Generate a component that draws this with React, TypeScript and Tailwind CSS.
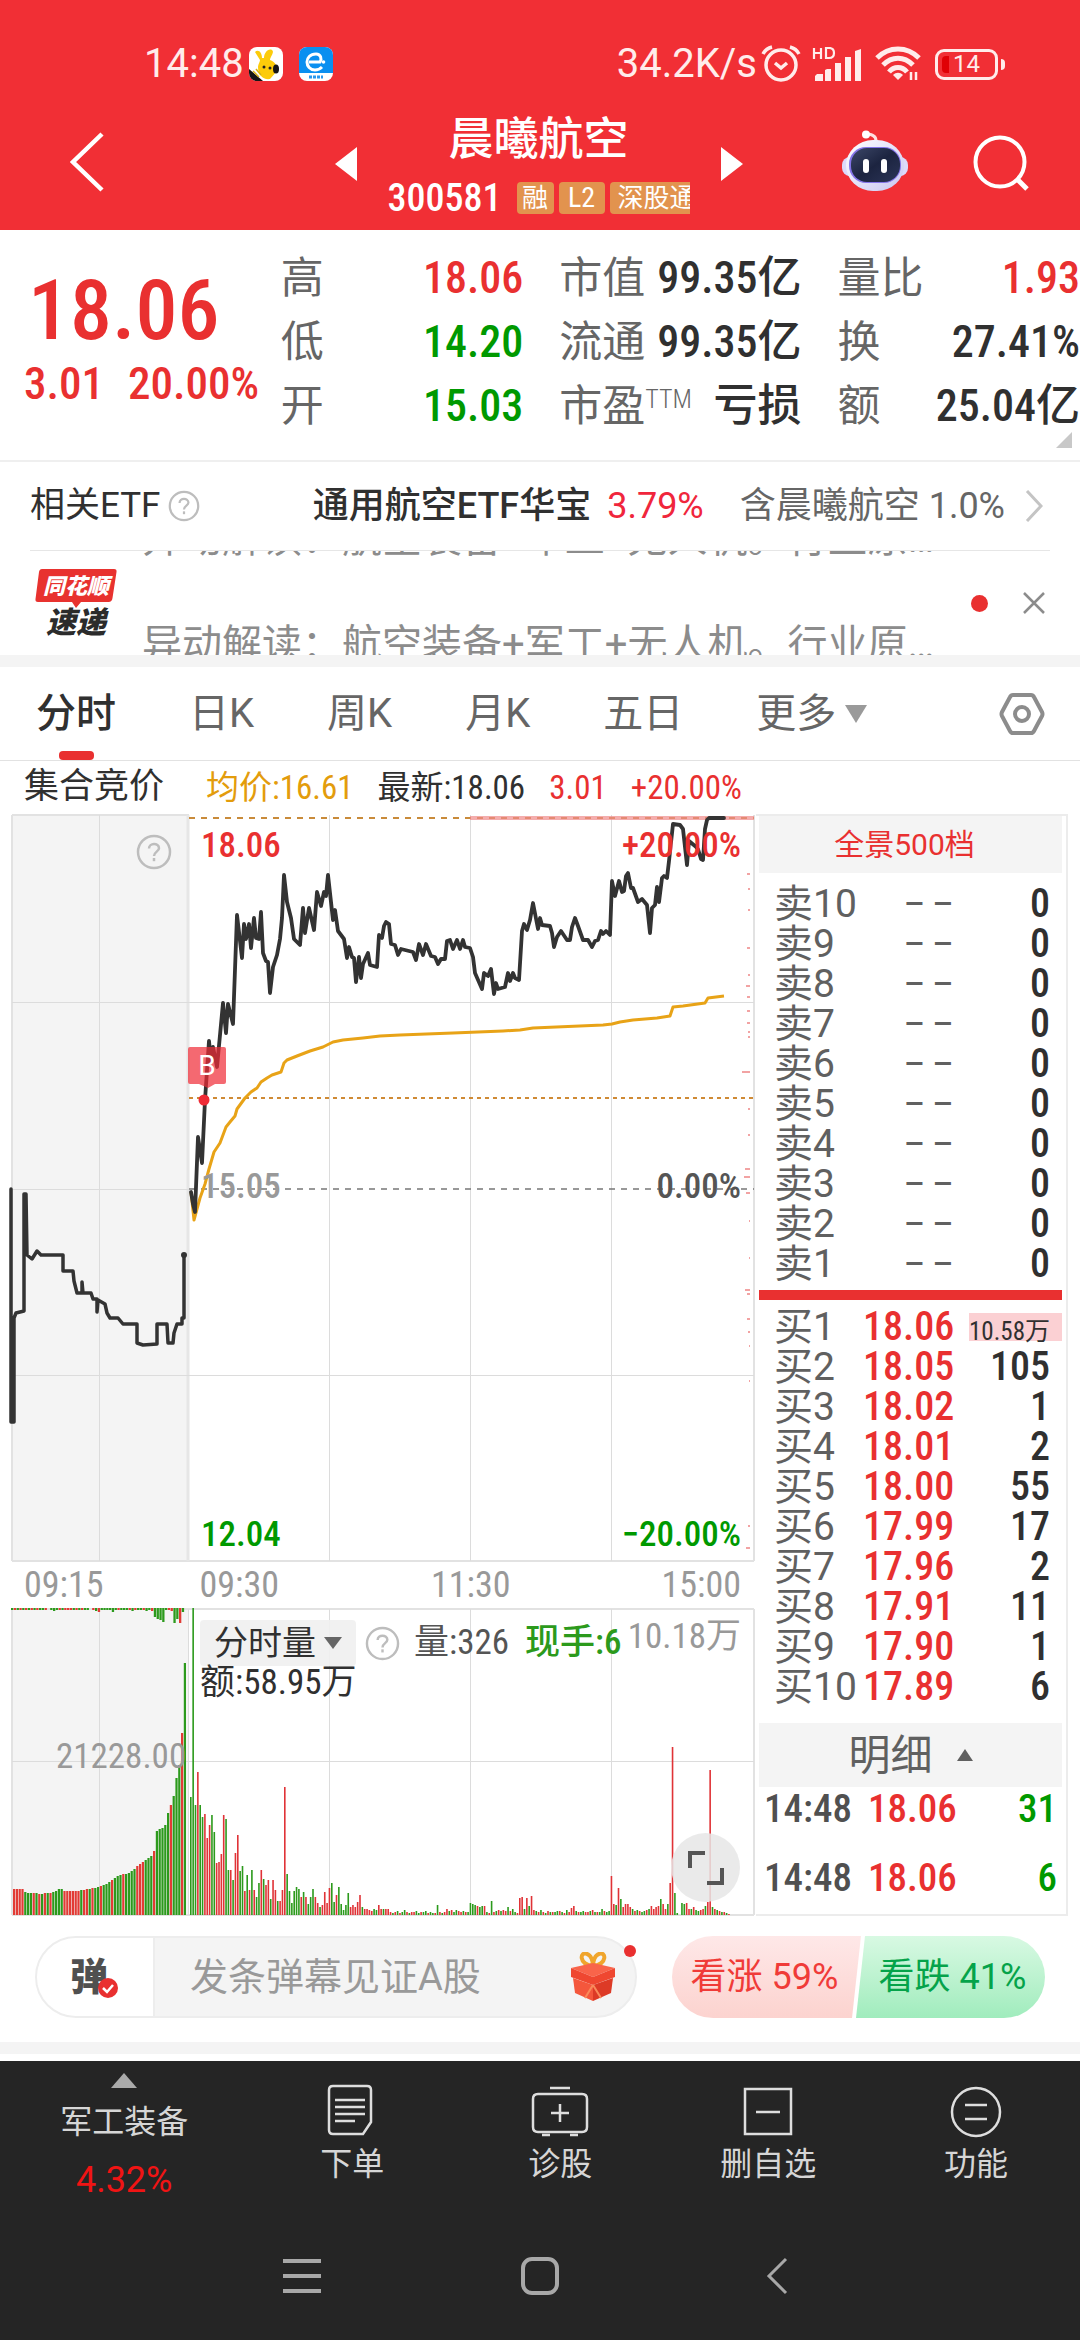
import { useState } from 'react';
import { clsx } from 'clsx';

const condensed = "font-[family-name:'Roboto_Condensed','Noto_Sans_CJK_SC',sans-serif]";

type Point = [number, number];

const auctionLine: Point[] = [
  [11, 375], [11, 608], [14, 608], [14, 504], [16, 499], [24, 497], [24, 380], [26, 380], [27, 441], [32, 445],
  [37, 437], [41, 441], [63, 441], [63, 457], [73, 457], [74, 467], [77, 479], [82, 479], [82, 468], [83, 479],
  [91, 479], [93, 485], [97, 485], [97, 498], [98, 486], [105, 490], [107, 499], [110, 504], [118, 504], [123, 510],
  [137, 510], [137, 529], [143, 531], [157, 530], [157, 510], [167, 510], [168, 529], [173, 529], [174, 519],
  [177, 510], [182, 510], [182, 504], [184, 504], [184, 441],
];

const priceLine: Point[] = [
  [191, 378], [193, 390], [195, 398], [198, 323], [202, 349], [205, 286], [209, 227], [211, 247], [213, 233],
  [217, 253], [223, 189], [226, 219], [228, 190], [233, 210], [237, 101], [242, 144], [244, 110], [246, 125],
  [249, 110], [251, 134], [254, 104], [256, 124], [259, 125], [261, 98], [263, 139], [266, 147], [268, 148],
  [270, 179], [273, 153], [277, 141], [280, 125], [282, 104], [284, 61], [287, 88], [291, 104], [294, 125],
  [300, 131], [303, 94], [305, 119], [309, 94], [314, 116], [317, 78], [321, 92], [324, 78], [326, 82], [328, 61],
  [333, 106], [335, 96], [338, 117], [344, 125], [347, 144], [349, 133], [352, 143], [354, 144], [356, 168],
  [359, 143], [361, 164], [363, 150], [368, 139], [370, 151], [377, 153], [379, 121], [382, 124], [384, 112],
  [386, 108], [389, 110], [391, 130], [395, 131], [398, 141], [401, 135], [413, 138], [416, 146], [419, 130],
  [423, 141], [426, 130], [431, 142], [435, 143], [438, 150], [441, 145], [445, 145], [447, 127], [450, 126],
  [453, 135], [457, 126], [460, 135], [463, 126], [465, 133], [470, 134], [473, 143], [475, 159], [482, 175],
  [484, 159], [488, 162], [491, 155], [494, 180], [496, 169], [498, 175], [505, 173], [508, 159], [510, 167],
  [513, 159], [515, 164], [519, 166], [522, 117], [524, 110], [527, 116], [530, 106], [533, 89], [538, 115],
  [540, 104], [542, 111], [550, 112], [552, 119], [554, 133], [557, 123], [561, 117], [567, 126], [570, 126],
  [572, 113], [575, 104], [578, 112], [583, 126], [588, 126], [592, 133], [595, 127], [598, 126], [601, 117],
  [603, 120], [606, 117], [610, 121], [612, 67], [615, 82], [619, 67], [622, 78], [624, 77], [626, 62], [628, 59],
  [631, 74], [633, 74], [638, 88], [642, 85], [647, 91], [650, 119], [652, 94], [655, 91], [657, 73], [659, 88],
  [662, 64], [664, 62], [667, 64], [669, 47], [673, 10], [680, 11], [683, 15], [687, 51], [689, 27], [695, 32],
  [698, 35], [701, 45], [703, 46], [705, 15], [707, 6], [709, 4], [724, 4],
];

const averageLine: Point[] = [
  [191, 378], [194, 406], [200, 384], [205, 370], [209, 355], [214, 338], [220, 329], [226, 313], [230, 308],
  [235, 302], [237, 295], [245, 284], [251, 278], [257, 274], [261, 268], [267, 264], [272, 261], [281, 258],
  [284, 249], [287, 246], [297, 242], [310, 237], [323, 233], [333, 228], [343, 226], [363, 224], [380, 222],
  [400, 221], [453, 219], [503, 217], [520, 216], [533, 214], [603, 211], [612, 210], [620, 208], [633, 206],
  [657, 204], [670, 202], [673, 193], [683, 192], [705, 189], [708, 184], [724, 182],
];

// y, width
const priceProfile: Point[] = [
  [59, 3], [74, 2], [95, 2], [133, 3], [160, 2], [171, 4], [182, 3], [196, 3], [208, 3], [217, 2], [222, 2],
  [257, 8], [294, 2], [320, 2], [354, 5], [362, 6], [378, 4], [406, 1], [443, 1], [475, 5], [479, 3], [504, 3],
  [517, 2], [531, 1], [566, 1], [711, 2], [733, 4],
];

// positive = up, negative = down
const auctionVolume = [
  26, 26, 26, 26, -23, -22, -22, 22, -22, 21, -21, 22, -22, 22, -23, -24, -26, -26, 24, 24, 24, 24, 24, 24, -25,
  25, 26, -26, 27, -27, -28, 29, -30, -31, -33, 35, -37, -39, -40, 41, -41, -42, -44, -46, 49, 51, 53, -55, -57,
  -59, 64, -84, -86, -87, -90, -102, 110, -119, -137, -150, 182, -252,
];

const auctionUnmatched = [
  -2, 2, -2, 2, -2, 2, -2, 2, -2, 2, -2, -2, 2, 0, -2, -3, -2, 2, -2, 2, 2, 2, -2, 2, -2, 2, -2, -2, 0, 2, -3, 4, -2,
  -2, -2, -2, -4, -2, 2, -2, -2, -2, 2, -3, 2, -2, -2, 2, -3, -2, 3, -9, -11, -12, -14, -2, 2, 3, -15, -11, 15, -4,
];

const minuteVolume = [
  -118, -307, -110, 143, -110, -98, 101, 77, 90, -100, -83, 52, 53, 61, 100, -96, -45, 45, -35, 62, 80, -44, -49, 24,
  -40, 25, -45, 25, -18, -32, 45, -36, 30, 35, -16, 35, 25, -14, 14, 25, 128, -41, -24, -12, -24, -28, -26, 18, -23,
  18, -11, -18, -26, 18, 12, -8, 10, 23, 12, 27, -32, -13, 20, -28, -11, -5, -10, -22, 8, 10, 8, 13, 20, -8, 6, 6, 5,
  4, -6, -5, 10, 6, -6, 6, 6, 3, -2, 3, -4, 2, -3, -5, 3, -2, 3, 3, -4, -2, 3, -3, -4, 2, -3, -2, 2, -10, 3, -2, 3, 6,
  -4, 5, -3, -5, 4, 3, -4, 3, -3, -12, -11, -10, 9, -8, -9, 9, -3, 2, -14, 3, -4, 5, -4, 5, 4, -8, 4, -6, -3, 2, 17,
  18, -6, 17, -9, 19, 5, -4, 3, -5, 3, -2, 4, -3, 3, -3, -4, 4, -3, 2, -5, 3, 7, 9, -4, 3, -3, -4, 3, 3, -4, 5, -3, 3,
  -3, -6, 4, -3, -4, 39, 11, -10, 27, -16, 8, 11, 11, 8, -6, 4, -5, 4, -3, -4, 5, -6, 9, 6, 8, 9, -16, 11, 6, -11, 32,
  168, -22, -2, 0, -12, -11, 12, 6, -6, 8, -5, -4, 5, 6, -9, 13, 145, -8, 6, -5, 4, -3, 3, -2, 1,
];

const sellOrders = ['卖10', '卖9', '卖8', '卖7', '卖6', '卖5', '卖4', '卖3', '卖2', '卖1'];

const buyOrders = [
  { level: '买1', price: '18.06', amount: '10.58万', highlight: true },
  { level: '买2', price: '18.05', amount: '105' },
  { level: '买3', price: '18.02', amount: '1' },
  { level: '买4', price: '18.01', amount: '2' },
  { level: '买5', price: '18.00', amount: '55' },
  { level: '买6', price: '17.99', amount: '17' },
  { level: '买7', price: '17.96', amount: '2' },
  { level: '买8', price: '17.91', amount: '11' },
  { level: '买9', price: '17.90', amount: '1' },
  { level: '买10', price: '17.89', amount: '6' },
];

const trades = [
  { time: '14:48', price: '18.06', amount: '31' },
  { time: '14:48', price: '18.06', amount: '6' },
];

const toPoints = (points: Point[]) => points.map((p) => p.join(',')).join(' ');

const HelpIcon = ({ className }: { className?: string }) => (
  <svg viewBox="0 0 36 36" className={className} fill="none" stroke="#bdbdbd" strokeWidth="2.5">
    <circle cx="18" cy="18" r="16" />
    <path d="M13 14.5c0-6 10-6 10-.3 0 3.4-5 3.6-5 7.8" />
    <path d="M18 24v3.2" />
  </svg>
);

const StatusBar = () => (
  <div className="flex h-[128px] items-center justify-between pl-[144px] pr-[75px] text-[40px] leading-[48px] text-[#ffeceb]">
    <div className="flex items-center">
      <span className="w-[105px]">14:48</span>
      <svg viewBox="0 0 34 34" className="h-[34px] w-[34px]">
        <rect width="34" height="34" rx="8" fill="#fff" />
        <path d="M0 22 14 34H8a8 8 0 0 1-8-8z" fill="#151515" />
        <path d="M9 20c0-3 2-5 2-7L6 5c3-3 7 0 7 6h2c0-5 4-10 8-8 3 2-2 7-2 10 5 2 8 6 7 11l-7 8c-7 1-12-4-12-12z" fill="#fccb0a" />
        <circle cx="15" cy="20" r="1.5" fill="#222" />
        <circle cx="21" cy="21" r="1.5" fill="#222" />
        <ellipse cx="27" cy="22" rx="3" ry="4.5" fill="#151515" />
        <path d="m4 24 6 6M7 22l5 6" stroke="#d7b316" strokeWidth="1.5" />
      </svg>
      <svg viewBox="0 0 34 34" className="ml-4 h-[34px] w-[34px]">
        <rect width="34" height="34" rx="8" fill="#fff" />
        <path d="M0 26V8a8 8 0 0 1 8-8h18a8 8 0 0 1 8 8v18z" fill="#0a8ff0" />
        <path d="M10 15h11c2-3 1-8-4-8-6 0-9 4-9 8s3 8 8 8c3 0 5-1 7-3" fill="none" stroke="#fff" strokeWidth="3" />
        <circle cx="24.5" cy="15" r="1.8" fill="#fff" />
        <path d="M10 30h14" stroke="#2a98ee" strokeWidth="3" strokeDasharray="3 1" />
      </svg>
    </div>
    <div className="flex items-center">
      <span>34.2K/s</span>
      <svg viewBox="0 0 40 38" className="ml-1 h-[38px] w-[40px]" fill="none" stroke="#ffeceb" strokeWidth="3.5">
        <circle cx="20" cy="20" r="15" />
        <path d="m14 18 6 5 6-5M2 9c2-4 5-6 9-7M38 9c-2-4-5-6-9-7" />
      </svg>
      <svg viewBox="0 0 50 34" className="ml-[11px] h-[34px] w-[50px]">
        <path d="M3 34v-5l2-2h6v7zM13 34V23l2-1h4v12zM23 34V16h6v18zM33 34V10h6v24zM43 34V4l6-2v32z" fill="#ffeceb" />
        <path d="M2 1v11M9 1v11M2 6h7M14 2v9h3q5 0 5-5t-5-5h-3z" fill="none" stroke="#ffeceb" strokeWidth="2.2" />
      </svg>
      <svg viewBox="0 0 46 36" className="ml-[13px] h-[36px] w-[46px]" fill="none" stroke="#ffeceb" strokeWidth="5">
        <path d="M2 12c12-12 30-12 42 0M8 19c9-9 21-9 30 0M14 26c5-6 13-6 18 0" />
        <path d="M18 29c3-3 7-3 10 0l-5 5z" fill="#ffeceb" stroke="none" />
        <path d="M36 26v8M41 26v8" strokeWidth="2.5" />
      </svg>
      <span className="relative ml-[14px] flex h-[31px] w-[63px] items-center justify-center rounded-[9px] border-3 border-[#ffeceb] text-[24px]">
        <span className="absolute bottom-1 left-1 top-1 w-[7px] rounded-l bg-[#e00005]" />
        14
      </span>
      <span className="ml-[3px] h-[11px] w-[4px] rounded-r bg-[#ffeceb]" />
    </div>
  </div>
);

const StockHeader = () => (
  <header className="flex h-[102px] justify-between pl-[70px] pr-[50px] text-white">
    <button aria-label="返回" className="h-[68px] w-[36px]">
      <svg viewBox="0 0 36 60" className="h-[60px] w-[36px]" fill="none" stroke="#fff" strokeWidth="4.5">
        <path d="M32 2 3 30l29 28" />
      </svg>
    </button>
    <div className="ml-[130px] flex">
      <button aria-label="上一只" className="mt-[18px] h-[36px] w-[24px]">
        <svg viewBox="0 0 24 36" className="h-[36px] w-[24px]"><path d="M23 1v34L1 18z" fill="#fff" /></svg>
      </button>
      <div className="-mt-[16px] w-[362px] overflow-hidden px-[30px]">
        <h1 className="text-center text-[45px] font-medium leading-[56px]">晨曦航空</h1>
        <div className={clsx('mt-3 flex h-[36px] items-center gap-[5px] overflow-hidden', condensed)}>
          <span className="mr-[10px] text-[38px] font-medium leading-[36px]">300581</span>
          <span className="w-[37px] shrink-0 rounded-sm bg-[#e2934e] text-center text-[26px] leading-[32px]">融</span>
          <span className="w-[46px] shrink-0 rounded-sm bg-[#e2934e] text-center text-[28px] leading-[32px]">L2</span>
          <span className="shrink-0 whitespace-nowrap rounded-sm bg-[#e2934e] pl-2 text-[26px] leading-[32px]">深股通</span>
        </div>
      </div>
      <button aria-label="下一只" className="mt-[18px] h-[36px] w-[24px]">
        <svg viewBox="0 0 24 36" className="h-[36px] w-[24px]"><path d="M1 1v34l22-17z" fill="#fff" /></svg>
      </button>
    </div>
    <div className="flex gap-[64px]">
      <button aria-label="智能助手" className="h-[66px] w-[68px]">
        <svg viewBox="0 0 66 62" className="h-[62px] w-[68px]">
          <defs>
            <linearGradient id="head" x1="0" y1="0" x2="1" y2="1">
              <stop offset="0" stopColor="#fff" />
              <stop offset="1" stopColor="#c9c6f2" />
            </linearGradient>
            <linearGradient id="face" x1="0" y1="0" x2="1" y2="1">
              <stop offset="0" stopColor="#3c4768" />
              <stop offset="0.5" stopColor="#1c2440" />
              <stop offset="1" stopColor="#2b3457" />
            </linearGradient>
          </defs>
          <path d="M24 4c6 0 10 2 10 7" fill="none" stroke="#ffdfe0" strokeWidth="3" />
          <circle cx="24" cy="4.5" r="4" fill="#fff" />
          <rect x="0" y="27" width="66" height="19" rx="8" fill="#dcd9fb" />
          <rect x="4" y="10" width="58" height="51" rx="27" fill="url(#head)" />
          <rect x="7" y="17" width="52" height="36" rx="17" fill="#8474e8" />
          <rect x="9" y="18" width="49" height="34" rx="16" fill="url(#face)" />
          <rect x="21" y="29" width="6" height="14" rx="3" fill="#fff" />
          <rect x="39" y="29" width="6" height="14" rx="3" fill="#fff" />
        </svg>
      </button>
      <button aria-label="搜索" className="h-[66px] w-[57px]">
        <svg viewBox="0 0 57 56" className="mt-1 h-[56px] w-[57px]" fill="none" stroke="#fff" strokeWidth="4">
          <circle cx="27" cy="27" r="24.5" />
          <path d="m44 44 10 10" strokeWidth="5" />
        </svg>
      </button>
    </div>
  </header>
);

const QuoteCell = ({ label, value, tone = 'text-[#303030]', sup }: { label: string; value: string; tone?: string; sup?: string }) => (
  <div className="flex h-[64px] items-center justify-between whitespace-nowrap">
    <span className="flex text-[43px] text-[#666]">
      {label}
      {sup && <span className={clsx('text-[26px] font-light leading-[50px]', condensed)}>{sup}</span>}
    </span>
    <span className={clsx('text-[44px] font-medium', condensed, tone)}>{value}</span>
  </div>
);

const QuotePanel = () => (
  <section className="relative flex h-[232px] border-b-2 border-[#efefef] pt-[16px]">
    <div className={clsx('w-[26%] whitespace-nowrap pl-6 text-[#e93030]', condensed)}>
      <div className="mt-3 pl-1 text-[84px] font-medium leading-[106px]">18.06</div>
      <div className="flex gap-6 text-[45px] font-medium leading-[40px]">
        <span>3.01</span>
        <span>20.00%</span>
      </div>
    </div>
    <div className="grid flex-1 grid-cols-3 content-start gap-x-9 leading-[64px]">
      <QuoteCell label="高" value="18.06" tone="text-[#e93030]" />
      <QuoteCell label="市值" value="99.35亿" />
      <QuoteCell label="量比" value="1.93" tone="text-[#e93030]" />
      <QuoteCell label="低" value="14.20" tone="text-[#009900]" />
      <QuoteCell label="流通" value="99.35亿" />
      <QuoteCell label="换" value="27.41%" />
      <QuoteCell label="开" value="15.03" tone="text-[#009900]" />
      <QuoteCell label="市盈" sup="TTM" value="亏损" />
      <QuoteCell label="额" value="25.04亿" />
    </div>
    <svg viewBox="0 0 16 16" className="absolute bottom-[12px] right-2 h-4 w-4"><path d="M16 0v16H0z" fill="#c8c8c8" /></svg>
  </section>
);

const EtfRow = () => (
  <section className="mx-[30px] flex h-[89px] items-center border-b border-[#e6e6e6] pr-[7px] text-[36px] text-[#303030]">
    <span className="text-[35px]">相关ETF</span>
    <HelpIcon className="ml-2 h-8 w-8" />
    <a href="#etf" className="ml-auto flex items-center whitespace-nowrap">
      <span className="font-medium">通用航空ETF华宝</span>
      <span className="ml-4 text-[#f0263c]">3.79%</span>
      <span className="ml-9 text-[#666]">含晨曦航空 1.0%</span>
      <svg viewBox="0 0 18 32" className="ml-5 h-8 w-[18px]" fill="none" stroke="#c4c4c4" strokeWidth="3"><path d="m2 1 14 15L2 31" /></svg>
    </a>
  </section>
);

const NewsTicker = ({ onClose }: { onClose: () => void }) => (
  <section className="flex h-[104px] items-start overflow-hidden pl-[34px] pr-[34px]">
    <svg viewBox="0 0 84 72" className="mt-4 h-[72px] w-[84px] shrink-0">
      <path d="M8 2h72q3 0 2.5 3l-4 26q-.5 4-4 4H47l-5 6-4-6H4q-3 0-2.5-3L5 5q.5-3 3-3z" fill="#e8322f" />
      <text x="42" y="27" textAnchor="middle" fontSize="22" fontWeight="900" fontStyle="italic" fill="#fff" fontFamily="'Noto Sans CJK SC', sans-serif">同花顺</text>
      <text x="42" y="66" textAnchor="middle" fontSize="30" fontWeight="900" fontStyle="italic" fill="#2b2b2b" fontFamily="'Noto Sans CJK SC', sans-serif">速递</text>
    </svg>
    <div className="-mt-[65px] ml-[24px] w-[815px] text-[40px] leading-[106px] text-[#8c8c8c]">
      <p className="truncate">异动解读：航空装备+军工+无人机。行业原因：军工</p>
      <p className="truncate">异动解读：航空装备+军工+无人机。行业原因：军工</p>
    </div>
    <span className="ml-auto mt-11 h-[17px] w-[17px] rounded-full bg-[#e93030]" />
    <button aria-label="关闭" onClick={onClose} className="ml-[34px] mt-10 h-6 w-6">
      <svg viewBox="0 0 24 24" className="h-6 w-6" stroke="#8c8c8c" strokeWidth="2.5"><path d="m2 2 20 20M22 2 2 22" /></svg>
    </button>
  </section>
);

const tabs = ['分时', '日K', '周K', '月K', '五日'];

const PeriodTabs = () => {
  const [active, setActive] = useState('分时');

  return (
    <nav className="flex h-[94px] items-stretch gap-[73px] border-b border-[#e2e2e2] pl-[36px] pr-[35px] text-[40px] text-[#666]">
      {tabs.map((tab) => (
        <button
          key={tab}
          onClick={() => setActive(tab)}
          className={clsx('relative whitespace-nowrap', active === tab && 'font-medium text-[#303030]')}
        >
          {tab}
          {active === tab && <span className="absolute bottom-0 left-1/2 -ml-[17px] h-[9px] w-[35px] rounded bg-[#e93030]" />}
        </button>
      ))}
      <button className="flex items-center gap-[9px] whitespace-nowrap">
        更多
        <svg viewBox="0 0 22 18" className="h-[18px] w-[22px]"><path d="M0 0h22L11 18z" fill="#9a9a9a" /></svg>
      </button>
      <button aria-label="设置" className="ml-auto">
        <svg viewBox="0 0 46 44" className="h-[44px] w-[46px]" fill="none" stroke="#8c8c8c" strokeWidth="4">
          <path d="M14 3h18q2 0 3 2l8 15q1 2 0 4l-8 15q-1 2-3 2H14q-2 0-3-2L3 24q-1-2 0-4l8-15q1-2 3-2z" />
          <circle cx="23" cy="22" r="7" />
        </svg>
      </button>
    </nav>
  );
};

const PriceChart = () => (
  <div className={clsx('relative h-[748px] text-[35px] font-medium leading-[34px]', condensed)}>
    <svg viewBox="0 0 756 748" preserveAspectRatio="none" className="h-full w-full" fill="none">
      <rect x="12" y="1" width="177" height="746" fill="#f4f4f4" />
      <path d="M12 1V747M754 1V747M12 747H754M12 1H189" stroke="#e2e2e2" strokeWidth="2" />
      <path d="M188 1V747" stroke="#e6e6e6" strokeWidth="3" />
      <path d="M99.5 1V747M329.5 1V747M470.5 1V747M611.5 1V747M12 188.5H754M12 375.5H189M12 561.5H754" stroke="#dcdcdc" />
      <path d="M189 4H754" stroke="#c98b3a" strokeWidth="2" strokeDasharray="6 6" />
      <path d="M470 4H754" stroke="#f08a8a" strokeOpacity="0.7" strokeWidth="4" />
      <path d="M189 284H754" stroke="#cf8a35" strokeWidth="2" strokeDasharray="4 4" />
      <path d="M189 375H754" stroke="#777" strokeWidth="1.5" strokeDasharray="6 6" />
      {priceProfile.map(([y, w]) => (
        <rect key={y} x={750 - w} y={y} width={w} height="2" fill="#f2a3a3" />
      ))}
      <polyline points={toPoints(averageLine)} stroke="#e8a317" strokeWidth="3" strokeLinejoin="round" />
      <polyline points={toPoints(auctionLine)} stroke="#333" strokeWidth="3.5" strokeLinejoin="round" strokeLinecap="round" />
      <polyline points={toPoints(priceLine)} stroke="#333" strokeWidth="3.8" strokeLinejoin="round" strokeLinecap="round" />
      <circle cx="184" cy="441" r="3" fill="#333" />
      <circle cx="204" cy="286" r="5.5" fill="#ef2a35" />
      <path d="M190 233h34q2 0 2 2v33q0 2-2 2h-9l-7 4-9-4h-9q-2 0-2-2v-33q0-2 2-2z" fill="#ef2a35" fillOpacity="0.7" />
    </svg>
    <span className="absolute left-[188px] top-[236px] w-[38px] text-center font-[family-name:Roboto,sans-serif] text-[28px] font-normal leading-[32px] text-white">B</span>
    <HelpIcon className="absolute left-[136px] top-[20px] h-[36px] w-[36px]" />
    <span className="absolute left-[201px] top-[15px] text-[#e93030]">18.06</span>
    <span className="absolute right-[15px] top-[15px] text-[#e93030]">+20.00%</span>
    <span className="absolute left-[201px] top-[356px] text-[#999]">15.05</span>
    <span className="absolute right-[15px] top-[356px] text-[#555]">0.00%</span>
    <span className="absolute bottom-[10px] left-[201px] text-[#009900]">12.04</span>
    <span className="absolute bottom-[10px] right-[15px] text-[#009900]">−20.00%</span>
  </div>
);

const VolumeChart = () => (
  <div className={clsx('relative h-[308px] text-[35px] leading-[36px]', condensed)}>
    <svg viewBox="0 0 756 308" preserveAspectRatio="none" className="h-full w-full" fill="none">
      <rect x="12" y="1" width="177" height="306" fill="#f4f4f4" />
      <path d="M12 1V307M754 1V307M12 307H754M12 1H754" stroke="#e2e2e2" strokeWidth="2" />
      <path d="M99.5 1V307M188.5 1V307M329.5 1V307M470.5 1V307M611.5 1V307M12 153.5H754" stroke="#dcdcdc" />
      {auctionVolume.map((v, i) => (
        <rect key={i} x={13 + i * 2.8} y={307 - Math.abs(v)} width="2.2" height={Math.abs(v)} fill={v > 0 ? '#e23b35' : '#2c9a1c'} />
      ))}
      {auctionUnmatched.map((v, i) => (
        <rect key={i} x={11 + i * 2.8} y="0" width="2.3" height={Math.abs(v)} fill={v > 0 ? '#e23b35' : '#2c9a1c'} />
      ))}
      {minuteVolume.map((v, i) => (
        <rect key={i} x={190 + i * 2.35} y={307 - Math.abs(v)} width="1.6" height={Math.abs(v)} fill={v > 0 ? '#e03337' : '#2c9a1c'} />
      ))}
    </svg>
    <div className="absolute left-[200px] right-[15px] top-[12px] flex items-center whitespace-nowrap">
      <button className="flex h-[46px] w-[156px] items-center gap-2 rounded bg-[#efefef]/90 pl-[14px] text-[34px] text-[#303030]">
        分时量
        <svg viewBox="0 0 18 12" className="h-[12px] w-[18px]"><path d="M0 0h18L9 12z" fill="#666" /></svg>
      </button>
      <HelpIcon className="ml-[9px] h-[35px] w-[35px]" />
      <span className="ml-[14px] text-[#555]">量:326</span>
      <span className="ml-[16px] font-medium text-[#2c9a1c]">现手:6</span>
      <span className="-mt-3 ml-auto text-[#999]">10.18万</span>
    </div>
    <span className="absolute left-[200px] top-[57px] text-[#303030]">额:58.95万</span>
    <span className="absolute left-[56px] top-[131px] text-[#999]">21228.00</span>
    <button aria-label="全屏" className="absolute bottom-[14px] right-[16px] flex h-[69px] w-[69px] items-center justify-center rounded-full bg-[#e6e6e6]/85">
      <svg viewBox="0 0 38 36" className="h-[36px] w-[38px]" fill="none" stroke="#555" strokeWidth="4"><path d="M3 18V3h15M35 18v15H20" /></svg>
    </button>
  </div>
);

const OrderBook = () => (
  <aside className="mr-[12px] border-y-2 border-r-2 border-[#ececec] pl-[3px] pr-[4px]">
    <button className="block h-[57px] w-full bg-[#f4f4f4] pr-3 text-[30px] text-[#e93030]">全景500档</button>
    <table className="mt-[11px] w-full text-[39px] leading-[40px]">
      <tbody>
        {sellOrders.map((level) => (
          <tr key={level} className="h-[40px]">
            <th scope="row" className="w-[104px] whitespace-nowrap p-0 pl-[15px] text-left font-normal text-[#606060]">{level}</th>
            <td className="p-0 pl-[41px] text-[32px] font-medium text-[#606060]">
              <span className="flex gap-2">
                <span>–</span>
                <span>–</span>
              </span>
            </td>
            <td className={clsx('p-0 pr-[12px] text-right text-[40px] font-medium text-[#303030]', condensed)}>0</td>
          </tr>
        ))}
      </tbody>
    </table>
    <div className="mt-[6px] h-[10px] bg-[#e93030]" />
    <table className="mt-[7px] w-full text-[39px] leading-[40px]">
      <tbody>
        {buyOrders.map((order) => (
          <tr key={order.level} className="h-[40px]">
            <th scope="row" className="w-[104px] whitespace-nowrap p-0 pl-[15px] text-left font-normal text-[#606060]">{order.level}</th>
            <td className={clsx('p-0 text-[40px] font-medium text-[#e93030]', condensed)}>{order.price}</td>
            <td className={clsx('p-0 text-right text-[#303030]', condensed)}>
              {order.highlight ? (
                <span className="ml-auto block h-[28px] w-[93px] whitespace-nowrap bg-[#fbd0d3] pr-[12px] text-[25px] leading-[38px]">{order.amount}</span>
              ) : (
                <span className="block pr-[12px] text-[40px] font-medium">{order.amount}</span>
              )}
            </td>
          </tr>
        ))}
      </tbody>
    </table>
    <button className="mt-[16px] flex h-[64px] w-full items-center justify-center gap-6 bg-[#f4f4f4] text-[42px] text-[#606060]">
      明细
      <svg viewBox="0 0 16 12" className="h-[12px] w-[16px]"><path d="M0 12h16L8 0z" fill="#606060" /></svg>
    </button>
    <table className={clsx('w-full text-[39px] font-medium leading-[44px]', condensed)}>
      <tbody>
        {trades.map((trade) => (
          <tr key={trade.amount} className="h-[69px] align-top last:h-[58px]">
            <td className="w-[109px] p-0 pl-[5px] text-[#505050]">{trade.time}</td>
            <td className="p-0 text-[#e93030]">{trade.price}</td>
            <td className="p-0 pr-[5px] text-right text-[#009900]">{trade.amount}</td>
          </tr>
        ))}
      </tbody>
    </table>
  </aside>
);

const GiftIcon = () => (
  <svg viewBox="0 0 46 50" className="h-[50px] w-[46px]">
    <path d="M23 14C8 12 10-1 17 2c4 1 6 7 6 12 0-5 2-11 6-12 7-3 9 10-6 12z" fill="none" stroke="#f0a52c" strokeWidth="4" />
    <path d="m1 16 22-5 22 5-22 9z" fill="#f9644a" />
    <path d="M1 16v9l22 8v-8zM45 16v9l-22 8v-8z" fill="#ef4730" />
    <path d="m3 26 20 7v16L5 41z" fill="#f4573c" />
    <path d="m43 26-20 7v16l18-8z" fill="#dd3a26" />
    <path d="m23 33-8 13M23 33l8 13" stroke="#f98a5a" strokeWidth="2" />
  </svg>
);

const DanmakuBar = () => (
  <section className="flex h-[126px] items-center justify-between pb-1 pl-[35px] pr-[35px]">
    <div className="relative flex h-[82px] w-[602px] items-center rounded-full border-2 border-[#ededed] bg-[#f4f4f4]">
      <button className="relative h-full w-[118px] rounded-l-full border-r-2 border-[#ededed] bg-white pr-3 text-[38px] font-black leading-[70px] text-[#505050]">
        弹
        <svg viewBox="0 0 20 20" className="absolute bottom-[18px] right-[35px] h-5 w-5">
          <circle cx="10" cy="10" r="10" fill="#e93030" />
          <path d="m5 10 4 4 6-7" fill="none" stroke="#fff" strokeWidth="2.5" />
        </svg>
      </button>
      <input
        aria-label="弹幕"
        placeholder="发条弹幕见证A股"
        className="ml-[35px] h-full w-[380px] bg-transparent text-[38px] text-[#303030] outline-none placeholder:text-[#999]"
      />
      <button aria-label="礼物"><GiftIcon /></button>
      <span className="absolute -right-[1px] top-[7px] h-3 w-3 rounded-full bg-[#e93030]" />
    </div>
    <div className="flex text-[36px] leading-[82px]">
      <button className="w-[189px] rounded-l-full bg-linear-to-b from-[#fee8e8] to-[#fcd3cf] pr-1 text-[#f03b38] [clip-path:polygon(0_0,100%_0,calc(100%-9px)_100%,0_100%)]">看涨 59%</button>
      <button className="-ml-[5px] w-[189px] rounded-r-full bg-linear-to-b from-[#d8f9e3] to-[#a0ecbd] pl-1 text-[#05a34a] [clip-path:polygon(9px_0,100%_0,100%_100%,0_100%)]">看跌 41%</button>
    </div>
  </section>
);

const actions = [
  {
    label: '下单',
    icon: <path d="M7 3h34q4 0 4 4v32L37 51H7q-4 0-4-4V7q0-4 4-4zM9 17h30M9 24h30M9 31h30M9 38h20" />,
  },
  {
    label: '诊股',
    icon: <path d="M4 11h44q5 0 5 5v28q0 5-5 5H4q-5 0-5-5V16q0-5 5-5zM16 5h20M8 52h8M36 52h8M26 21v18M17 30h18" />,
  },
  { label: '删自选', icon: <path d="M3 6h46v45H3zM14 29h24" /> },
  { label: '功能', icon: <path d="M50 29a24 24 0 1 1-48 0 24 24 0 0 1 48 0zM15 22h22M15 36h22" /> },
];

const BottomBar = () => (
  <footer className="flex h-[156px] text-[#d6d6d6]">
    <a href="#sector" className="flex w-[23%] flex-col items-center pt-3">
      <svg viewBox="0 0 26 15" className="h-[15px] w-[26px]"><path d="M13 0 26 15H0z" fill="#aaa" /></svg>
      <span className="mt-[14px] text-[32px] leading-[40px]">军工装备</span>
      <span className="mt-[18px] text-[36px] leading-[40px] text-[#f01414]">4.32%</span>
    </a>
    {actions.map((action) => (
      <button key={action.label} className="flex flex-1 flex-col items-center pt-[22px]">
        <svg viewBox="0 0 52 56" className="h-[56px] w-[52px] overflow-visible" fill="none" stroke="#dedede" strokeWidth="2.5">
          {action.icon}
        </svg>
        <span className="mt-[5px] text-[32px] leading-[40px]">{action.label}</span>
      </button>
    ))}
  </footer>
);

const SystemNav = () => (
  <nav className="flex h-[123px] justify-center gap-[200px] pt-[40px]">
    <button aria-label="最近任务" className="h-[38px] w-[38px]">
      <svg viewBox="0 0 38 38" className="h-[38px] w-[38px]" stroke="#a8a8a8" strokeWidth="4"><path d="M0 4h38M0 19h38M0 34h38" /></svg>
    </button>
    <button aria-label="主页" className="h-[38px] w-[38px]">
      <svg viewBox="0 0 38 38" className="h-[38px] w-[38px]" fill="none" stroke="#a8a8a8" strokeWidth="4"><rect x="2" y="2" width="34" height="34" rx="9" /></svg>
    </button>
    <button aria-label="返回上级" className="h-[38px] w-[38px]">
      <svg viewBox="0 0 38 38" className="h-[38px] w-[38px]" fill="none" stroke="#a8a8a8" strokeWidth="3"><path d="M27 2 10 19l17 17" /></svg>
    </button>
  </nav>
);

const App = () => {
  const [showNews, setShowNews] = useState(true);

  return (
    <div className="min-h-screen bg-white font-[family-name:Roboto,'Noto_Sans_CJK_SC',sans-serif]">
      <div className="bg-[#f12f35]">
        <StatusBar />
        <StockHeader />
      </div>
      <QuotePanel />
      <EtfRow />
      {showNews && <NewsTicker onClose={() => setShowNews(false)} />}
      <div className="h-3 bg-[#f4f4f4]" />
      <PeriodTabs />
      <div className={clsx('flex h-[53px] items-center whitespace-nowrap pl-[24px] text-[33px] text-[#303030]', condensed)}>
        <span className="mr-[42px] text-[35px]">集合竞价</span>
        <span className="mr-[24px] text-[#e39c0c]">均价:16.61</span>
        <span className="mr-[24px]">最新:18.06</span>
        <span className="mr-[24px] text-[#e93030]">3.01</span>
        <span className="text-[#e93030]">+20.00%</span>
      </div>
      <main className="grid grid-cols-[7fr_3fr]">
        <div>
          <PriceChart />
          <div className={clsx('relative flex h-[46px] items-center justify-between pl-[24px] pr-[15px] text-[36px] text-[#999]', condensed)}>
            <span>09:15</span>
            <span className="ml-[96px] mr-auto">09:30</span>
            <span className="mr-[151px]">11:30</span>
            <span>15:00</span>
          </div>
          <VolumeChart />
        </div>
        <OrderBook />
      </main>
      <DanmakuBar />
      <div className="mb-[7px] h-3 bg-[#f4f4f4]" />
      <div className="bg-[#252525]">
        <BottomBar />
        <SystemNav />
      </div>
    </div>
  );
};

export default App;
